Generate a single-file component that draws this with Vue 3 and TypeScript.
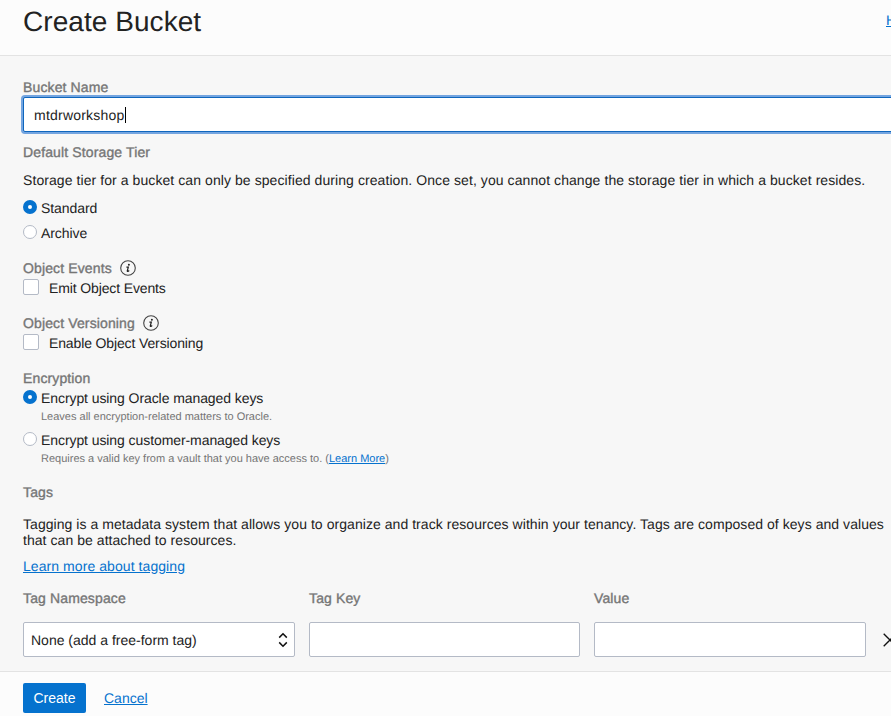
<script setup lang="ts">
import { ref } from 'vue'

const bucketName = ref<string>('mtdrworkshop')
const tier = ref<string>('Standard')
const encryption = ref<string>('oracle')

const tiers: string[] = ['Standard', 'Archive']

const toggles = [
  { id: 'events', heading: 'Object Events', label: 'Emit Object Events' },
  { id: 'versioning', heading: 'Object Versioning', label: 'Enable Object Versioning' },
]
</script>

<template>
  <div class="panel">
    <header class="header">
      <h1 class="title">Create Bucket</h1>
      <a class="link help">Help</a>
    </header>

    <main class="body">
      <div class="label bucket-label">Bucket Name</div>
      <div class="text-input focused">
        <span class="typed">{{ bucketName }}</span><span class="caret"></span>
      </div>

      <div class="label tier-label">Default Storage Tier</div>
      <p class="copy tier-copy">Storage tier for a bucket can only be specified during creation. Once set, you cannot change the storage tier in which a bucket resides.</p>
      <div class="tiers">
        <div v-for="t in tiers" :key="t" class="option" @click="tier = t">
          <span class="radio" :class="{ on: tier === t }"></span>
          <span>{{ t }}</span>
        </div>
      </div>

      <section v-for="g in toggles" :key="g.id" class="toggle">
        <div class="toggle-head">
          <span class="label">{{ g.heading }}</span>
          <svg class="info" width="16" height="16" viewBox="0 0 16 16">
            <circle cx="8" cy="8" r="7.3" fill="none" stroke="#444" stroke-width="1.1" />
            <circle cx="8.9" cy="4.7" r="1" fill="#222" />
            <path d="M6.4 7.2 H8.3 L7.3 10.8 Q7.2 11.6 8 11.4 L9.2 10.6" fill="none" stroke="#222" stroke-width="1.25" />
          </svg>
        </div>
        <div class="toggle-row">
          <span class="checkbox"></span>
          <span>{{ g.label }}</span>
        </div>
      </section>

      <div class="label enc-label">Encryption</div>
      <div class="option" @click="encryption = 'oracle'">
        <span class="radio" :class="{ on: encryption === 'oracle' }"></span>
        <span>Encrypt using Oracle managed keys</span>
      </div>
      <p class="hint">Leaves all encryption-related matters to Oracle.</p>
      <div class="option second" @click="encryption = 'customer'">
        <span class="radio" :class="{ on: encryption === 'customer' }"></span>
        <span>Encrypt using customer-managed keys</span>
      </div>
      <p class="hint">Requires a valid key from a vault that you have access to. (<a class="link">Learn More</a>)</p>

      <div class="label tags-label">Tags</div>
      <p class="copy tags-copy">Tagging is a metadata system that allows you to organize and track resources within your tenancy. Tags are composed of keys and values<br />that can be attached to resources.</p>
      <a class="link tag-link">Learn more about tagging</a>

      <div class="tag-grid">
        <div class="label">Tag Namespace</div>
        <div class="label">Tag Key</div>
        <div class="label">Value</div>
        <span></span>
        <div class="field select">
          <span class="select-text">None (add a free-form tag)</span>
          <svg width="10" height="16" viewBox="0 0 10 16" fill="none" stroke="#111" stroke-width="1.5">
            <path d="M1.2 5.6 L5 1.8 L8.8 5.6 M1.2 10.4 L5 14.2 L8.8 10.4" />
          </svg>
        </div>
        <div class="field"></div>
        <div class="field"></div>
        <svg class="remove" width="14" height="14" viewBox="0 0 14 14" fill="none" stroke="#111" stroke-width="1.3">
          <path d="M0.7 0.7 L13.3 13.3 M13.3 0.7 L0.7 13.3" />
        </svg>
      </div>
    </main>

    <footer class="footer">
      <button class="create" type="button">Create</button>
      <a class="link cancel">Cancel</a>
    </footer>
  </div>
</template>

<style>
body {
  margin: 0;
  overflow: hidden;
}
</style>

<style scoped>
.panel {
  box-sizing: border-box;
  width: 891px;
  height: 716px;
  display: flex;
  flex-direction: column;
  overflow: hidden;
  background: #f7f7f7;
  color: #222;
  font: 14px/16px "Liberation Sans", Arial, sans-serif;
  text-rendering: geometricPrecision;
  white-space: nowrap;
}
p, h1 { margin: 0; font-weight: 400; }
.header {
  box-sizing: border-box;
  height: 56px;
  flex: none;
  display: flex;
  justify-content: space-between;
  padding: 6px 0 0 23px;
  background: #fcfcfc;
  border-bottom: 1px solid #e3e3e3;
}
.title {
  font-size: 28px;
  line-height: 32px;
  letter-spacing: 0.06px;
}
.help {
  width: 5px;
  margin-top: 6px;
}
.link {
  color: #0572ce;
  text-decoration: underline;
}
.body {
  flex: none;
  box-sizing: border-box;
  height: 615px;
  padding: 23px 0 0 23px;
}
.label {
  color: #757575;
  letter-spacing: 0.13px;
  -webkit-text-stroke: 0.35px #757575;
}
.text-input {
  box-sizing: border-box;
  display: flex;
  align-items: center;
  width: 900px;
  height: 35px;
  margin-top: 2px;
  padding: 1px 10px 0;
  background: #fff;
  border: 1px solid #0f66bd;
  border-radius: 2px;
  box-shadow: 0 0 0 2px #74a5e0;
}
.typed { letter-spacing: 0.22px; }
.caret {
  width: 1px;
  height: 16px;
  background: #000;
}
.tier-label { margin-top: 12px; }
.tier-copy {
  margin-top: 12px;
  letter-spacing: 0.076px;
}
.tiers {
  display: flex;
  flex-direction: column;
  gap: 9px;
  margin: 12px 0 19px;
}
.option {
  display: flex;
  gap: 4px;
  height: 16px;
  letter-spacing: -0.08px;
}
.radio {
  box-sizing: border-box;
  width: 14px;
  height: 14px;
  border: 1px solid #b4bac6;
  border-radius: 50%;
  background: #fff;
}
.radio.on {
  border: 5px solid #0572ce;
}
.toggle { height: 55px; }
.toggle-head {
  display: flex;
  gap: 8px;
  height: 16px;
}
.toggle-row {
  display: flex;
  gap: 10px;
  margin-top: 3px;
  line-height: 18px;
  letter-spacing: -0.13px;
}
.checkbox {
  box-sizing: border-box;
  width: 16px;
  height: 16px;
  border: 1px solid #b4bac6;
  border-radius: 2px;
  background: #fff;
}
.enc-label { margin-bottom: 4px; }
.hint {
  margin: 5px 0 0 18px;
  color: #757575;
  font-size: 11px;
  line-height: 12px;
}
.second { margin-top: 9px; }
.tags-label { margin-top: 19px; }
.tags-copy {
  margin-top: 16px;
  letter-spacing: 0.052px;
}
.tag-link {
  display: block;
  margin-top: 10px;
  letter-spacing: 0.07px;
}
.tag-grid {
  display: grid;
  grid-template-columns: 272px 271px 272px 14px;
  grid-template-rows: 16px 35px;
  column-gap: 14px;
  row-gap: 16px;
  margin-top: 16px;
}
.field {
  box-sizing: border-box;
  border: 1px solid #b4bac6;
  border-radius: 2px;
  background: #fff;
}
.select {
  display: flex;
  align-items: center;
  justify-content: space-between;
  padding: 1px 6px 0 7px;
}
.remove {
  margin: 11px 0 0 3px;
}
.footer {
  box-sizing: border-box;
  flex: 1;
  display: flex;
  gap: 18px;
  padding: 11px 0 0 23px;
  background: #fcfcfc;
  border-top: 1px solid #e3e3e3;
}
.create {
  width: 63px;
  height: 30px;
  padding: 0;
  border: 0;
  border-radius: 2px;
  background: #0572ce;
  color: #fff;
  font: inherit;
}
.cancel { margin-top: 7px; }
</style>
